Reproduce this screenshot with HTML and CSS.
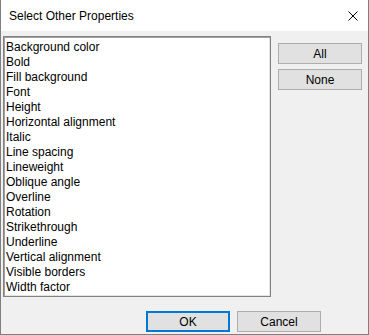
FILE: index.html
```html
<!DOCTYPE html>
<html lang="en">
<head>
  <meta charset="utf-8" />
  <title>Select Other Properties</title>
  <link rel="stylesheet" href="styles.css">
</head>
<body>
  <div class="window">
    <!-- Title bar -->
    <header class="titlebar">
      <span class="title">Select Other Properties</span>
      <svg class="close" width="10" height="10" viewBox="0 0 10 10" aria-label="Close">
        <path d="M0.5 0.5 L9.5 9.5 M9.5 0.5 L0.5 9.5" stroke="#000" stroke-width="1" fill="none"/>
      </svg>
    </header>

    <main class="client">
      <div class="content">
        <ul class="listbox">
          <li>Background color</li>
          <li>Bold</li>
          <li>Fill background</li>
          <li>Font</li>
          <li>Height</li>
          <li>Horizontal alignment</li>
          <li>Italic</li>
          <li>Line spacing</li>
          <li>Lineweight</li>
          <li>Oblique angle</li>
          <li>Overline</li>
          <li>Rotation</li>
          <li>Strikethrough</li>
          <li>Underline</li>
          <li>Vertical alignment</li>
          <li>Visible borders</li>
          <li>Width factor</li>
        </ul>
        <div class="side">
          <button class="btn">All</button>
          <button class="btn">None</button>
        </div>
      </div>

      <div class="footer">
        <button class="btn default">OK</button>
        <button class="btn">Cancel</button>
      </div>
    </main>
  </div>
</body>
</html>
```

FILE: styles.css
```css
:root{
  --face:#f0f0f0;
  --frame:#7f7f7f;
  --btn:#e1e1e1;
  --btn-border:#adadad;
  --accent:#0078d7;
}

*{box-sizing:border-box;margin:0;padding:0}
body{
  font-family:'Liberation Sans',Arial,sans-serif;
  font-size:12px;color:#000;background:#fff;
}

/* —— window frame —— */
.window{
  width:369px;height:335px;
  display:flex;flex-direction:column;
  border:1px solid var(--frame);border-top:none;
}

.titlebar{
  height:31px;background:#fff;
  display:flex;align-items:center;justify-content:space-between;
  padding:0 10px 0 8px;
}
.title{font-size:12px}
.close{display:block;margin-top:1px}

.client{
  flex:1;background:var(--face);
  display:flex;flex-direction:column;
  padding:5px 6px 2px 2px;
}

.content{display:flex;align-items:flex-start}

/* —— list —— */
.listbox{
  list-style:none;
  width:268px;height:261px;
  background:#fff;
  border:1px solid #828282;
  box-shadow:inset 1px 1px 0 #a0a0a0,inset -1px -1px 0 #e3e3e3;
  padding:3px 2px 1px;
}
.listbox li{height:15px;line-height:15px;white-space:nowrap}

.side{
  display:flex;flex-direction:column;gap:5px;
  margin:7px 0 0 7px;
}

/* —— buttons —— */
.btn{
  width:84px;height:21px;
  font:inherit;color:#000;
  background:var(--btn);
  border:1px solid var(--btn-border);
}
.btn.default{border:2px solid var(--accent)}

.footer{
  display:flex;justify-content:flex-end;gap:7px;
  margin-top:14px;padding-right:41px;
}
```
